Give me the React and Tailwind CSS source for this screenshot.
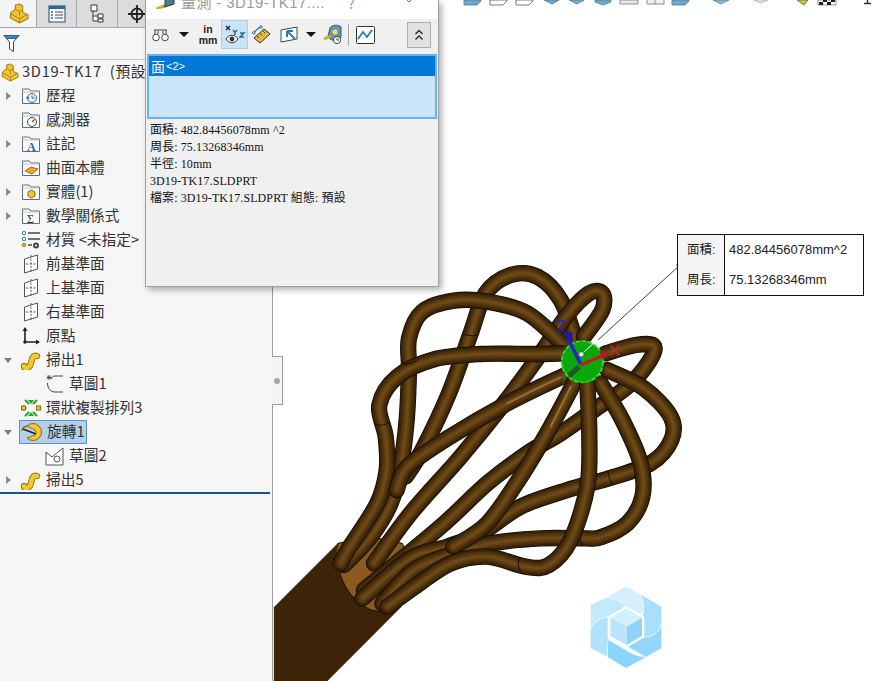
import React from "react";

const spline = (p) => {
  let d = `M${p[0][0]},${p[0][1]}`;
  for (let i = 0; i < p.length - 1; i++) {
    const a = p[Math.max(i - 1, 0)], b = p[i], c = p[i + 1], e = p[Math.min(i + 2, p.length - 1)];
    d += ` C${b[0] + (c[0] - a[0]) / 6},${b[1] + (c[1] - a[1]) / 6} ${c[0] - (e[0] - b[0]) / 6},${c[1] - (e[1] - b[1]) / 6} ${c[0]},${c[1]}`;
  }
  return d;
};

const shades = [
  [49, "#120a02"],
  [45, "#33200a"],
  [38, "#3f2809"],
  [30, "#4c310c"],
  [22, "#59390f"],
  [14, "#634113"],
  [7, "#6d4a18"],
];

const Tube = ({ pts, glow }) => {
  const d = spline(pts);
  return (
    <g fill="none" strokeLinecap="round" strokeLinejoin="round">
      {shades.map(([w, c]) => <path key={w} d={d} stroke={c} strokeWidth={w} />)}
      {glow && <path d={spline(glow)} stroke="#96743f" strokeWidth="5" />}
    </g>
  );
};

const tubes = [
  { pts: [[905, 210], [860, 90], [790, 20], [710, 15], [635, 70], [590, 190], [525, 370], [445, 540], [395, 620]] },
  { pts: [[930, 200], [985, 120], [985, 70], [945, 70], [880, 135], [790, 265], [690, 400], [560, 560], [410, 730], [300, 880]] },
  { pts: [[995, 250], [1085, 225], [1140, 228], [1125, 275], [1060, 350], [960, 420], [860, 490], [760, 550], [640, 640], [500, 770], [270, 960]] },
  { pts: [[870, 225], [760, 130], [640, 95], [540, 92], [445, 125], [405, 205], [405, 300], [398, 450], [380, 590], [350, 700], [290, 800], [210, 885]] },
  { pts: [[1000, 300], [1110, 355], [1190, 440], [1192, 510], [1130, 580], [1005, 625], [880, 660], [740, 710], [620, 790], [520, 830], [410, 865], [265, 985]] },
  { pts: [[980, 340], [1045, 450], [1100, 580], [1105, 680], [1060, 760], [980, 802], [930, 805], [800, 805], [650, 820], [540, 850], [420, 900], [325, 1000]] },
  { pts: [[870, 250], [780, 252], [620, 252], [480, 268], [370, 320], [316, 405], [335, 500], [338, 600], [310, 700], [225, 835], [200, 880]] },
  { pts: [[885, 310], [700, 400], [520, 505], [400, 590], [368, 660]], glow: [[860, 322], [780, 360], [700, 400]] },
  { pts: [[905, 330], [830, 470], [740, 620], [640, 760], [538, 830]], glow: [[890, 350], [860, 410], [830, 470]] },
  { pts: [[940, 340], [946, 500], [940, 650], [890, 810], [825, 885], [755, 890], [640, 860], [530, 880], [430, 945], [340, 1010]] },
];

const Model = () => (
  <svg className="absolute inset-0" width="600" height="681" viewBox="272 0 600 681">
    <g transform="translate(273 270) scale(.33333)">
      <path d="M0,1012 L192,820 C170,880 220,1000 300,1022 L382,1010 L160,1233 L0,1233Z" fill="#3d2408" stroke="#3d2408" />
      <path d="M192,820 C175,880 215,1000 300,1022 C340,1030 370,1015 385,1000 L420,900 L385,820 L290,800Z" fill="#8a5a20" stroke="#160d02" strokeWidth="3" />
      {tubes.map((t, i) => <Tube key={i} pts={t.pts} glow={t.glow} />)}
      <g fill="none" stroke="#160d02" strokeWidth="3">
        <path d="M382,280 C395,285 415,282 430,270" />
        <path d="M567,190 C580,198 600,200 615,193" />
        <path d="M300,460 C310,468 330,468 345,458" />
        <path d="M1005,605 C1002,620 1008,635 1020,645" />
        <path d="M925,785 C918,800 918,815 925,828" />
        <path d="M740,862 C728,875 730,895 745,908" />
      </g>
      <circle cx="925" cy="275" r="62" fill="#0aa80a" stroke="#3fdc3f" strokeWidth="5" strokeDasharray="14 4" />
      <path d="M880,310 A62,62 0 0 0 975,320 A70,70 0 0 1 880,310Z" fill="#0bc00b" />
      <path d="M915,290 L885,318" stroke="#1c5a28" strokeWidth="16" />
      <path d="M873,320 l-6,24 m8,-18 l-10,-6" stroke="#1c7a28" strokeWidth="3" fill="none" />
      <path d="M920,282 L882,205" stroke="#2626c8" strokeWidth="11" />
      <path d="M868,190 L896,185 L893,222Z" fill="#1c1cb4" />
      <path d="M852,153 L872,153 L852,185 L872,185" fill="none" stroke="#2020c0" strokeWidth="4" />
      <path d="M920,285 L985,257" stroke="#c01c24" strokeWidth="10" />
      <path d="M975,240 L1005,250 L985,270Z" fill="#a92024" />
      <path d="M1010,226 L1035,256 M1035,226 L1010,256" stroke="#b92a2a" strokeWidth="5" />
      <path d="M922,253 L1218,-15" stroke="#ffffff" strokeWidth="3" />
      <circle cx="922" cy="253" r="8" fill="#e8e8e8" stroke="#333" strokeWidth="2" />
    </g>
    <path d="M597,340 L679,265" stroke="#111" strokeWidth=".8" />
    <circle cx="679" cy="265" r="3" fill="#fff" stroke="#111" />
    <path d="M677,265 h4" stroke="#111" strokeWidth=".7" />
    <g transform="translate(560 570) scale(.33333)" stroke="#ffffff" strokeWidth="1.5">
      <path d="M195,48 L238,72 C255,110 245,130 240,135 L195,110 C180,90 150,85 130,85Z" fill="#d6effc" />
      <path d="M238,72 L302,110 L302,160 C295,190 270,205 245,200 L245,135 C250,120 250,95 238,72Z" fill="#a8dffb" />
      <path d="M302,160 L302,235 L255,262 C230,245 210,240 195,225 L245,200 C270,205 295,190 302,160Z" fill="#93d6f9" />
      <path d="M255,262 L195,295 L140,262 C140,240 137,225 140,208 L195,240 C215,255 235,258 255,262Z" fill="#8ad6fb" />
      <path d="M88,235 L88,180 C95,160 115,140 145,140 L145,205 C137,215 138,240 140,262Z" fill="#b0e2fb" />
      <path d="M88,105 L130,85 C150,80 180,90 195,110 L145,140 C115,140 95,160 88,180Z" fill="#c5e9fc" />
      <path d="M195,108 L250,140 L250,202 L195,234 L140,202 L140,140Z" fill="#ffffff" stroke="none" />
      <path d="M195,115 L243,143 L197,170 L148,143Z" fill="#d4effd" stroke="none" />
      <path d="M148,143 L197,170 L197,225 L148,198Z" fill="#bbe5fb" stroke="none" />
      <path d="M243,143 L197,170 L197,225 L243,198Z" fill="#8fd3f7" stroke="none" />
    </g>
  </svg>
);

const ViewStrip = () => (
  <svg className="block" width="600" height="8" viewBox="272 0 600 8">
    <g stroke="#4d7f9c" strokeWidth=".8">
      <path d="M463,0 V5 H476 L480,1 V0Z" fill="#6fa8c9" />
      <path d="M489,0 V5 H502 L506,1 V0Z" fill="#fff" stroke="#555" />
      <path d="M515,0 V5 H528 L532,1 V0Z" fill="#fff" stroke="#555" />
      <path d="M543,0 L551,4 L558,0Z" fill="#6fa8c9" />
      <path d="M568,0 L576,4 L583,0Z" fill="#7db0cc" />
      <path d="M594,0 V2 L602,5 L610,2 V0Z" fill="#6fa8c9" />
      <path d="M619,0 V4 H637 V0Z" fill="#e8e8e8" stroke="#777" />
      <path d="M646,0 V4 H663 V0 M654,0 V4" fill="#f1f1f1" stroke="#777" />
      <path d="M671,0 V5 H684 L688,1 V0Z" fill="#6fa8c9" />
      <path d="M712,0 L720,4 L728,0Z" fill="#8fb9d0" />
      <path d="M753,0 L760,3 L767,0Z" fill="#ececec" stroke="#aaa" />
    </g>
    <path d="M796,0 L803,5 L807,0Z" fill="#d9c24a" stroke="#5d7a3a" />
    <path d="M817,0 H835 V5 H817Z" fill="#fff" stroke="#333" strokeWidth=".5" />
    <path d="M818,2 h4 v3 h-4z M826,2 h4 v3 h-4z M822,0 h4 v2 h-4z M830,0 h4 v2 h-4z" fill="#222" />
    <path d="M863,3.5 H870 M866.5,0 V3.5" stroke="#333" strokeWidth="1.5" />
  </svg>
);

const PartIcon = ({ size = 20 }) => (
  <svg width={size} height={size} viewBox="0 0 20 20">
    <path d="M3,9 L7,6 V2 L11,1 L14,3 V9 L19,11 V15 L11,19 L2,14Z" fill="#f4c430" stroke="#a87912" strokeWidth="1" />
    <path d="M2,10 L11,15 L18,11 M11,15 V19 M7,6 L11,8 L14,6 M11,8 V12" fill="none" stroke="#a87912" strokeWidth=".9" />
  </svg>
);

const Folder = ({ children }) => (
  <svg width="20" height="18" viewBox="0 0 20 18">
    <path d="M1.5,16.5 V2 H8 L10,4 H18.5 V16.5Z" fill="#fff" stroke="#5f6e78" />
    <path d="M1.5,5 H18.5" stroke="#b8c2c9" />
    {children}
  </svg>
);

const Plane = () => (
  <svg width="16" height="20" viewBox="0 0 16 20">
    <path d="M1.5,5 L14.5,1 V15 L1.5,19Z" fill="#fff" stroke="#555" />
    <path d="M8,1 V19 M3,10 H13" stroke="#555" strokeDasharray="2 1.6" />
  </svg>
);

const Sweep = () => (
  <svg width="20" height="20" viewBox="0 0 20 20">
    <path d="M3,16 C3,20 9,18 10,13 C11,8 12,5 16,6" fill="none" stroke="#8a6a10" strokeWidth="6.4" strokeLinecap="round" />
    <path d="M3,16 C3,20 9,18 10,13 C11,8 12,5 16,6" fill="none" stroke="#f4c82f" strokeWidth="4.6" strokeLinecap="round" />
  </svg>
);

const icons = {
  history: <Folder><circle cx="11" cy="11" r="4.5" fill="#e8f0f5" stroke="#2a6f9e" /><path d="M11,8.5 V11 H13.5 M6,9 L8,11 M5,11 H8" stroke="#2a6f9e" fill="none" /></Folder>,
  sensor: <Folder><circle cx="11" cy="11" r="4.5" fill="#fff" stroke="#444" /><path d="M11,11 L13.5,8.5" stroke="#c43a2a" strokeWidth="1.4" /></Folder>,
  note: <Folder><text x="6" y="15.5" fontSize="12" fontWeight="700" fontFamily="Liberation Serif, serif" fill="#2f5f9e">A</text></Folder>,
  surface: <Folder><path d="M4,12 L10,8 L17,10 L11,15Z" fill="#f2a33a" stroke="#b5671a" /></Folder>,
  solid: <Folder><path d="M7,9 L10.5,7 L14,9 V13 L10.5,15 L7,13Z" fill="#f4c430" stroke="#8a6a10" /></Folder>,
  sum: <Folder><text x="6" y="15.5" fontSize="12" fontFamily="Liberation Serif, serif" fill="#333">Σ</text></Folder>,
  material: (
    <svg width="20" height="20" viewBox="0 0 20 20">
      <circle cx="3" cy="3" r="1.7" fill="#fff" stroke="#2d7fc1" /><circle cx="3" cy="9" r="1.7" fill="#fff" stroke="#2d7fc1" /><circle cx="3" cy="15" r="1.7" fill="#f0c020" stroke="#a87912" />
      <path d="M7,3 H19 M7,9 H19 M7,15 H11" stroke="#3c4a54" strokeWidth="1.6" />
      <circle cx="15" cy="15.5" r="3" fill="#3c4a54" /><circle cx="15" cy="15.5" r="1" fill="#fff" />
    </svg>
  ),
  plane: <Plane />,
  origin: (
    <svg width="20" height="20" viewBox="0 0 20 20">
      <path d="M4,2 V16 H18" fill="none" stroke="#222" strokeWidth="1.6" />
      <path d="M1.5,5 L4,1 L6.5,5Z M15,13.5 L19,16 L15,18.5Z" fill="#222" />
      <circle cx="4" cy="16" r="1.8" fill="#222" />
    </svg>
  ),
  sweep: <Sweep />,
  sketch1: (
    <svg width="18" height="20" viewBox="0 0 18 20">
      <path d="M3,1 V6 M.5,3.5 H5.5 M1.2,1.7 L4.8,5.3 M4.8,1.7 L1.2,5.3" stroke="#333" strokeWidth=".8" />
      <path d="M17,2 H9 C7,2 6,3 5.5,5 M1.5,9 C1.5,15 5,18 9,18 H17" fill="none" stroke="#444" />
    </svg>
  ),
  sketch2: (
    <svg width="19" height="19" viewBox="0 0 19 19">
      <path d="M1,5 L7,10 L18,1 V18 H1Z" fill="#fff" stroke="#555" />
      <circle cx="12" cy="12" r="3" fill="#fff" stroke="#555" />
    </svg>
  ),
  pattern: (
    <svg width="20" height="20" viewBox="0 0 20 20">
      <path d="M7,2 H13 L10,6Z M7,18 H13 L10,14Z M2,7 V13 L6,10Z" fill="#27a829" />
      <path d="M4,2 L8,6 M16,2 L12,6 M4,18 L8,14 M16,18 L12,14" stroke="#27a829" strokeWidth="2" />
      <rect x="0.5" y="8" width="4" height="4" fill="#f4c430" stroke="#8a6a10" />
      <rect x="15.5" y="8" width="4" height="4" fill="#f4c430" stroke="#8a6a10" />
    </svg>
  ),
  revolve: (
    <svg width="22" height="20" viewBox="0 0 22 20">
      <path d="M6,4 A8.5,8.5 0 1 1 6,16 L14,13 A3.5,3.5 0 0 0 14,8Z" fill="#f4c82f" stroke="#8a6a10" />
      <path d="M2,7 L15,12" stroke="#222" strokeWidth="1.6" />
      <path d="M1,9 C1,6 4,4 6,4" fill="none" stroke="#8a6a10" strokeWidth="1.4" />
    </svg>
  ),
};

const Arrow = ({ kind }) => (
  <span className="flex h-3 w-[10px] shrink-0 items-center justify-center">
    {kind === "right" && <span className="h-0 w-0 border-y-[4px] border-l-[5px] border-y-transparent border-l-[#8c8c8c]" />}
    {kind === "down" && <span className="h-0 w-0 border-x-[4px] border-t-[5px] border-x-transparent border-t-[#7a7a7a]" />}
  </span>
);

const rows = [
  { arrow: "right", icon: "history", label: "歷程" },
  { icon: "sensor", label: "感測器" },
  { arrow: "right", icon: "note", label: "註記" },
  { icon: "surface", label: "曲面本體" },
  { arrow: "right", icon: "solid", label: "實體(1)" },
  { arrow: "right", icon: "sum", label: "數學關係式" },
  { icon: "material", label: "材質 <未指定>" },
  { icon: "plane", label: "前基準面" },
  { icon: "plane", label: "上基準面" },
  { icon: "plane", label: "右基準面" },
  { icon: "origin", label: "原點" },
  { arrow: "down", icon: "sweep", label: "掃出1" },
  { sub: true, icon: "sketch1", label: "草圖1" },
  { icon: "pattern", label: "環狀複製排列3" },
  { arrow: "down", icon: "revolve", label: "旋轉1", selected: true },
  { sub: true, icon: "sketch2", label: "草圖2" },
  { arrow: "right", icon: "sweep", label: "掃出5" },
];

const Row = ({ arrow, icon, label, sub, selected }) => (
  <div className={`flex h-6 items-center ${sub ? "pl-[45px]" : "pl-[3px]"}`}>
    {!sub && <Arrow kind={arrow} />}
    <div className={`flex h-6 items-center ${sub ? "" : "ml-[6px] pl-[1px] pr-[1px]"} ${selected ? "border border-[#5a90c4] bg-[#b4cfe8]" : ""}`}>
      <span className={`flex items-center justify-center ${sub ? "w-[19px]" : "w-[22px]"}`}>{icons[icon]}</span>
      <span className={`whitespace-nowrap pb-[2px] text-[14.7px] leading-[22px] text-[#333] ${sub ? "ml-[5px]" : "ml-[4px]"}`}>{label}</span>
    </div>
  </div>
);

const Tabs = () => (
  <div className="flex h-7 border-b border-[#a9a9a9] bg-[#dcdcdc]">
    <div className="flex w-[37px] items-center justify-center border-r border-[#a9a9a9] bg-[#f5f5f5] pb-[1px]"><PartIcon size={21} /></div>
    <div className="flex w-[40px] items-center justify-center border-r border-[#a9a9a9]">
      <svg width="18" height="18" viewBox="0 0 18 18">
        <rect x="1" y="1" width="16" height="16" fill="#fff" stroke="#2d6a8e" strokeWidth="1.2" />
        <rect x="1" y="1" width="16" height="3" fill="#2d6a8e" />
        <path d="M3,7 H5 M3,10 H5 M3,13 H5" stroke="#2d6a8e" strokeWidth="1.5" />
        <path d="M7,7 H15 M7,10 H15 M7,13 H15" stroke="#444" />
      </svg>
    </div>
    <div className="flex w-[41px] items-center justify-center border-r border-[#a9a9a9]">
      <svg width="16" height="19" viewBox="0 0 16 19">
        <path d="M2,1 H8 V7 H2Z M4,7 V17 H9 M4,12 H9 M9,10 H14 V14 H9Z M9,15 H14 V18 H9Z" fill="#fff" stroke="#333" />
      </svg>
    </div>
    <div className="flex flex-1 items-center pl-[10px]">
      <svg width="18" height="18" viewBox="0 0 18 18">
        <circle cx="9" cy="9" r="5.5" fill="none" stroke="#222" strokeWidth="1.8" />
        <path d="M9,0 V18 M0,9 H18" stroke="#222" strokeWidth="1.8" />
      </svg>
    </div>
  </div>
);

const Sidebar = () => (
  <aside className="flex h-full w-[273px] shrink-0 flex-col border-r border-[#9c9c9c] bg-[#f6f6f6] font-['Noto_Sans_CJK_TC','Noto_Sans',sans-serif]">
    <Tabs />
    <div className="flex h-[32px] items-center border-b border-[#c4c4c4] pl-[3px]">
      <svg width="17" height="19" viewBox="0 0 17 19">
        <path d="M1,1.5 H16 L10.5,8 V17.5 L6.5,15 V8Z" fill="#fff" stroke="#444" />
        <path d="M1,1.5 H16 L13.5,4.5 H3.5Z" fill="#3d87b8" stroke="#2d6a8e" />
      </svg>
    </div>
    <div className="flex h-6 items-center">
      <PartIcon size={19} />
      <span className="ml-[3px] whitespace-pre pb-[2px] text-[14.7px] leading-[22px] tracking-[0.7px] text-[#333]">3D19-TK17  (預設</span>
    </div>
    {rows.map((r) => <Row key={r.label} {...r} />)}
    <div className="h-[2px] w-[270px] bg-[#1e4f91]" />
  </aside>
);

const Caret = () => <span className="h-0 w-0 border-x-[5px] border-t-[5px] border-x-transparent border-t-[#111]" />;

const Toolbar = () => (
  <div className="flex h-[33px] items-center bg-[#f0f0f0] pb-[2px] pl-[6px]">
    <svg width="17" height="14" viewBox="0 0 17 14">
      <circle cx="4" cy="9.5" r="3.3" fill="#fff" stroke="#444" /><circle cx="13" cy="9.5" r="3.3" fill="#fff" stroke="#444" />
      <path d="M2,2 H15 M3,2 V7 M14,2 V7 M6,3 V6 M11,3 V6" stroke="#444" fill="none" />
    </svg>
    <span className="ml-[10px] flex"><Caret /></span>
    <span className="ml-[9px] flex w-[20px] flex-col items-center font-['Liberation_Sans',sans-serif] text-[10.5px] font-bold leading-[11px] text-[#222]"><span>in</span><span>mm</span></span>
    <span className="ml-[3px] flex h-[29px] w-[27px] items-center justify-center border border-[#a8cfec] bg-[#cbe3f6]">
      <svg width="22" height="20" viewBox="0 0 22 20">
        <path d="M2,1 L6,5 M6,1 L2,5" stroke="#333" strokeWidth="1.6" />
        <path d="M9,5 L11,7.5 L13,5 M11,7.5 V10" stroke="#2a6f9e" strokeWidth="1.5" fill="none" />
        <path d="M16,8 H20 L16,12 H20" stroke="#2a6f9e" strokeWidth="1.5" fill="none" />
        <path d="M2,14 C5,9 11,9 14,14 C11,19 5,19 2,14Z" fill="#fff" stroke="#333" />
        <circle cx="8" cy="14" r="2.4" fill="#333" />
      </svg>
    </span>
    <span className="ml-[3px] flex w-[20px] justify-center">
      <svg width="19" height="20" viewBox="0 0 19 20">
        <path d="M2,13 L12,4 L18,9 L8,18Z" fill="#e5b83a" stroke="#333" />
        <path d="M5,11 L7,13 M8,8.5 L10,10.5 M11,6 L13,8" stroke="#333" />
        <path d="M1,8 L8,2" stroke="#2a6f9e" strokeWidth="1.2" />
        <circle cx="1.8" cy="8" r="1.3" fill="#fff" stroke="#2a6f9e" /><circle cx="9" cy="2" r="1.3" fill="#fff" stroke="#2a6f9e" />
      </svg>
    </span>
    <span className="ml-[9px] flex">
      <svg width="19" height="17" viewBox="0 0 19 17">
        <path d="M1,4 L17,1 V13 L1,16Z" fill="#fff" stroke="#444" />
        <path d="M7,5 V11 M7,5 H13 M7,5 L15,13" stroke="#2a7ab0" strokeWidth="2" fill="none" />
      </svg>
    </span>
    <span className="ml-[7px] flex"><Caret /></span>
    <span className="ml-[7px] flex">
      <svg width="20" height="21" viewBox="0 0 20 21">
        <path d="M5,12 L7,4 C8,1 16,0 18,3 V13 C17,16 9,17 7,15Z" fill="#4f9ac9" stroke="#2d5f82" />
        <circle cx="12" cy="8" r="3.4" fill="#f4d95a" stroke="#777" />
        <path d="M1,15 L8,12" stroke="#d0a52a" strokeWidth="2.6" />
        <circle cx="14" cy="16" r="3.6" fill="#fff" stroke="#444" />
        <path d="M14,14 V16 H16" stroke="#444" fill="none" />
      </svg>
    </span>
    <span className="ml-[5px] h-[22px] w-px bg-[#a8a8a8]" />
    <span className="ml-[7px] flex">
      <svg width="19" height="18" viewBox="0 0 19 18">
        <rect x=".5" y=".5" width="18" height="17" rx="1" fill="#fff" stroke="#333" />
        <path d="M2,13 L7,6 L11,11 L16,4" stroke="#2a7ab0" strokeWidth="1.8" fill="none" />
      </svg>
    </span>
    <span className="ml-[32px] flex h-[26px] w-[24px] items-center justify-center border border-[#adadad] bg-[#e1e1e1]">
      <svg width="10" height="12" viewBox="0 0 10 12"><path d="M1.5,5 L5,1.5 L8.5,5 M1.5,10.5 L5,7 L8.5,10.5" fill="none" stroke="#222" strokeWidth="1.3" /></svg>
    </span>
  </div>
);

const Dialog = () => (
  <section className="absolute left-[145px] top-0 z-10 flex h-[287px] w-[294px] flex-col overflow-hidden border-x border-b border-[#a0a0a0] bg-[#f0f0f0] shadow-[3px_3px_6px_rgba(0,0,0,0.3)] font-['Noto_Sans_CJK_TC','Noto_Sans',sans-serif]">
    <div className="flex h-[19px] shrink-0 items-start overflow-hidden bg-white pl-[10px]">
      <svg className="mt-[-4px]" width="20" height="13" viewBox="0 0 20 13">
        <path d="M1,12 L9,9 V2 L18,0 V8 L9,11Z" fill="#4a7c8a" stroke="#333" />
        <path d="M0,13 L8,10" stroke="#d8b02a" strokeWidth="3" />
      </svg>
      <span className="ml-[5px] mt-[-7px] whitespace-nowrap font-['Liberation_Sans','Noto_Sans_CJK_TC',sans-serif] text-[15px] leading-5 tracking-[0.4px] text-[#9a9a9a]">量測 - 3D19-TK17....</span>
      <span className="ml-[23px] mt-[-7px] text-[14px] leading-5 text-[#9a9a9a]">?</span>
      <svg className="ml-[48px] mt-[-3px]" width="12" height="10" viewBox="0 0 12 10"><path d="M0,-1 L6,5 L12,-1" fill="none" stroke="#777" /></svg>
    </div>
    <Toolbar />
    <div className="mx-px mt-[2px] h-[65px] shrink-0 border-2 border-[#69b4e6] bg-[#cce4f8]">
      <div className="flex h-[20px] items-center bg-[#0078d7] pl-[2px] text-white">
        <span className="text-[14px] leading-5">面</span>
        <span className="ml-[1px] font-['Liberation_Sans',sans-serif] text-[11px] leading-5">&lt;2&gt;</span>
      </div>
    </div>
    <div className="pl-[4px] pt-[3px] font-['Liberation_Serif','Noto_Sans_CJK_TC',serif] text-[12px] leading-[17px] tracking-[0.1px] text-[#111]">
      <div>面積: 482.84456078mm ^2</div>
      <div>周長: 75.13268346mm</div>
      <div>半徑: 10mm</div>
      <div>3D19-TK17.SLDPRT</div>
      <div>檔案: 3D19-TK17.SLDPRT 組態: 預設</div>
    </div>
  </section>
);

const Callout = () => (
  <div className="absolute left-[404px] top-[234px] grid h-[62px] w-[187px] grid-cols-[47px_1fr] border border-[#111] bg-white text-[13px] leading-[30px] text-[#222] font-['Liberation_Sans','Noto_Sans_CJK_TC',sans-serif]">
    <div className="row-span-2 border-r border-[#111] bg-[#f5f5f5] pl-[9px] text-[12.5px]">
      <div>面積:</div>
      <div>周長:</div>
    </div>
    <div className="row-span-2 pl-[4px]">
      <div>482.84456078mm^2</div>
      <div>75.13268346mm</div>
    </div>
  </div>
);

export default function App() {
  return (
    <div className="relative flex h-[681px] w-[872px] overflow-hidden bg-white">
      <Sidebar />
      <main className="relative min-w-0 flex-1">
        <ViewStrip />
        <Model />
        <Callout />
        <div className="absolute left-[-1px] top-[356px] flex h-[49px] w-[11px] items-center justify-center border border-l-0 border-[#9c9c9c] bg-[#f4f4f4]">
          <span className="h-[6px] w-[6px] rounded-full bg-[#a8a8a8]" />
        </div>
      </main>
      <Dialog />
    </div>
  );
}
